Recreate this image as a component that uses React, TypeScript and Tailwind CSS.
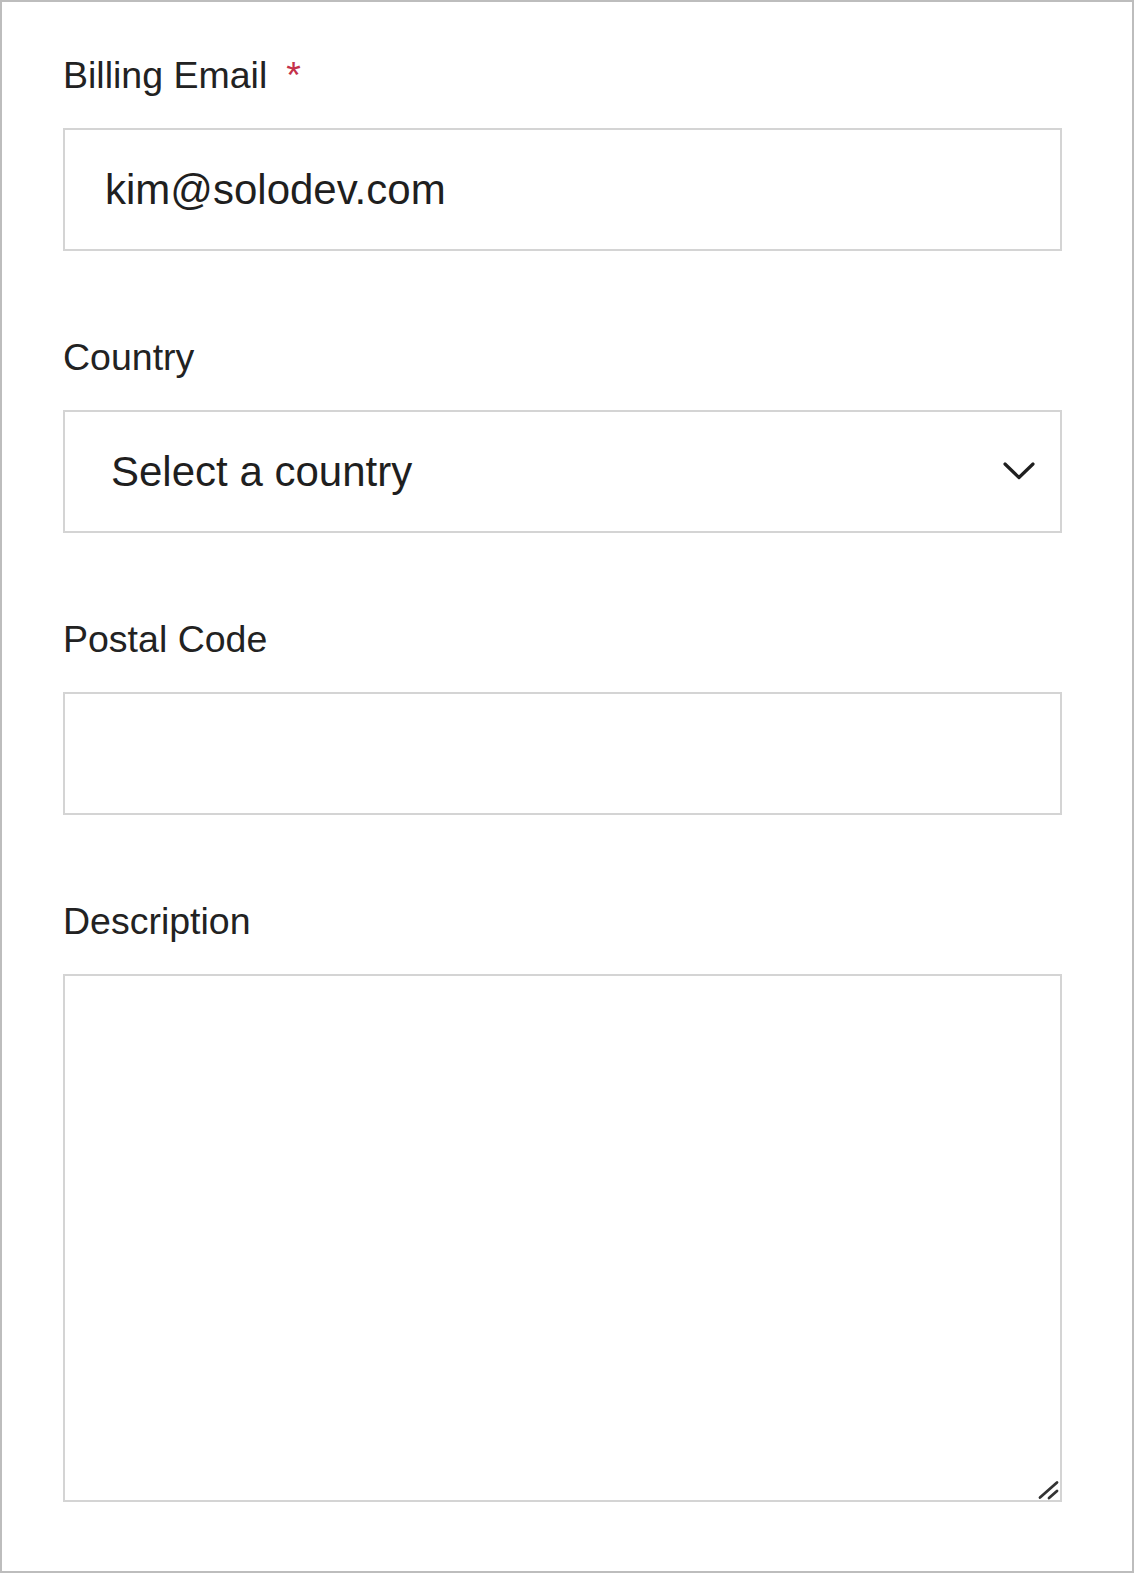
import React from "react";

const labelCls = "block text-[37.5px] leading-[42px] text-[#222]";
const boxCls =
  "block w-full h-[123px] border-2 border-[#d4d4d4] bg-white text-[42px] text-[#1f1f1f] outline-none";

const App = () => {
  return (
    <div
      className="w-full h-[1573px] bg-white border-2 border-[#bdbdbd] pl-[61px] pt-[52px]"
      style={{ fontFamily: '"Liberation Sans", Arial, sans-serif' }}
    >
      <form className="w-[999px] flex flex-col">
        {/* Billing Email */}
        <label className={labelCls}>
          Billing Email<span className="ml-[19px] text-[#c4314b]">*</span>
        </label>
        <input
          type="email"
          readOnly
          value="kim@solodev.com"
          className={`${boxCls} mt-[32px] pl-[40px]`}
        />

        {/* Country */}
        <label className={`${labelCls} mt-[85px]`}>Country</label>
        <div className="relative mt-[32px]">
          <select
            defaultValue=""
            className={`${boxCls} appearance-none pl-[46px] pr-[80px] text-[42.3px]`}
          >
            <option value="">Select a country</option>
          </select>
          <svg
            className="absolute right-[27px] top-[52px] pointer-events-none"
            width="32"
            height="18"
            viewBox="0 0 32 18"
            fill="none"
          >
            <path
              d="M2 2 L16 15.5 L30 2"
              stroke="#1f1f1f"
              strokeWidth="3.2"
              strokeLinecap="round"
              strokeLinejoin="round"
            />
          </svg>
        </div>

        {/* Postal Code */}
        <label className={`${labelCls} mt-[85px]`}>Postal Code</label>
        <input type="text" className={`${boxCls} mt-[32px] pl-[40px]`} />

        {/* Description */}
        <label className={`${labelCls} mt-[85px]`}>Description</label>
        <div className="relative mt-[32px]">
          <textarea className="block w-full h-[528px] resize-none border-2 border-[#d4d4d4] bg-white outline-none" />
          <svg
            className="absolute right-[2px] bottom-[2px] pointer-events-none"
            width="22"
            height="20"
            viewBox="0 0 22 20"
            fill="none"
          >
            <path d="M2 17.5 L19 2.5" stroke="#333" strokeWidth="2.8" strokeLinecap="round" />
            <path d="M11 18 L19 11" stroke="#333" strokeWidth="2.8" strokeLinecap="round" />
          </svg>
        </div>
      </form>
    </div>
  );
};

export default App;
